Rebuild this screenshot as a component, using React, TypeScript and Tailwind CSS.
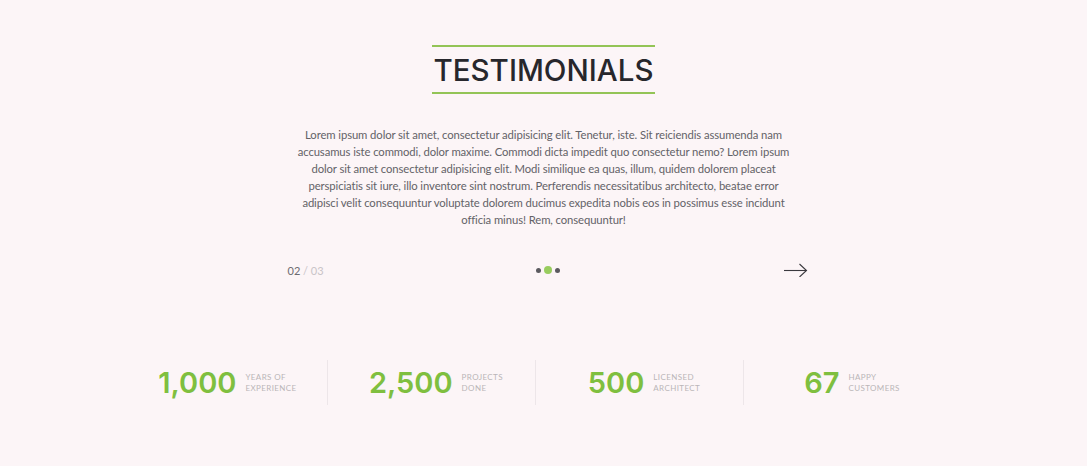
import React from "react";

const stats = [
  { n: "1,000", a: "Years of", b: "Experience" },
  { n: "2,500", a: "Projects", b: "Done" },
  { n: "500", a: "Licensed", b: "Architect" },
  { n: "67", a: "Happy", b: "Customers" },
];

export default function App() {
  return (
    <div className="w-[1087px] h-[466px] bg-[#fcf5f7] overflow-hidden" style={{ fontFamily: "Lato, 'Noto Sans', sans-serif" }}>
      <div className="flex flex-col items-center pt-[45px]">
        <h2
          className="inline-block border-y-2 border-[#93c456] px-[2px] pt-[6px] pb-[5px] text-[29.5px] leading-[34px] font-medium text-[#27272c]"
          style={{ fontFamily: "Inter, sans-serif" }}
        >
          TESTIMONIALS
        </h2>
        <p className="mt-[32px] w-[502px] text-center text-[11.3px] leading-[17px] tracking-[-0.1px] text-[#636267]">
          Lorem ipsum dolor sit amet, consectetur adipisicing elit. Tenetur, iste. Sit reiciendis assumenda nam
          accusamus iste commodi, dolor maxime. Commodi dicta impedit quo consectetur nemo? Lorem ipsum dolor sit
          amet consectetur adipisicing elit. Modi similique ea quas, illum, quidem dolorem placeat perspiciatis sit
          iure, illo inventore sint nostrum. Perferendis necessitatibus architecto, beatae error adipisci velit
          consequuntur voluptate dolorem ducimus expedita nobis eos in possimus esse incidunt officia minus! Rem,
          consequuntur!
        </p>
        <div className="ml-[6px] mt-[35px] flex w-[522px] items-center justify-between pl-[2px]">
          <div className="w-[60px] text-[11px] leading-none text-[#6c6b70]">
            02 <span className="text-[#c9c4c7]">/ 03</span>
          </div>
          <div className="flex items-center gap-[3px]">
            <span className="h-[5px] w-[5px] rounded-full bg-[#5b5a5f]" />
            <span className="h-[8px] w-[8px] rounded-full bg-[#98cc5e]" />
            <span className="h-[5px] w-[5px] rounded-full bg-[#5b5a5f]" />
          </div>
          <div className="flex w-[60px] justify-end">
            <svg width="25" height="14" viewBox="0 0 25 14" fill="none" stroke="#3a393e" strokeWidth="1.1">
              <path d="M1 7.5h22.5" />
              <path d="M16.5 1l7 6.5-7 6.5" />
            </svg>
          </div>
        </div>
      </div>
      <div className="mt-[83px] flex justify-center pr-[17px]">
        <div className="grid w-[832px] grid-cols-4">
          {stats.map((s, i) => (
            <div
              key={s.n}
              className={
                "flex h-[45px] items-center justify-center gap-[9px] pl-[9px] " +
                (i > 0 ? "border-l border-[#ede6e9]" : "")
              }
            >
              <span className="text-[29px] font-semibold leading-none text-[#7fbf3f]" style={{ fontFamily: "Inter, sans-serif" }}>
                {s.n}
              </span>
              <span className="flex flex-col text-[8px] uppercase leading-[11px] tracking-[0.4px] text-[#bab5b8]">
                <span>{s.a}</span>
                <span>{s.b}</span>
              </span>
            </div>
          ))}
        </div>
      </div>
    </div>
  );
}
